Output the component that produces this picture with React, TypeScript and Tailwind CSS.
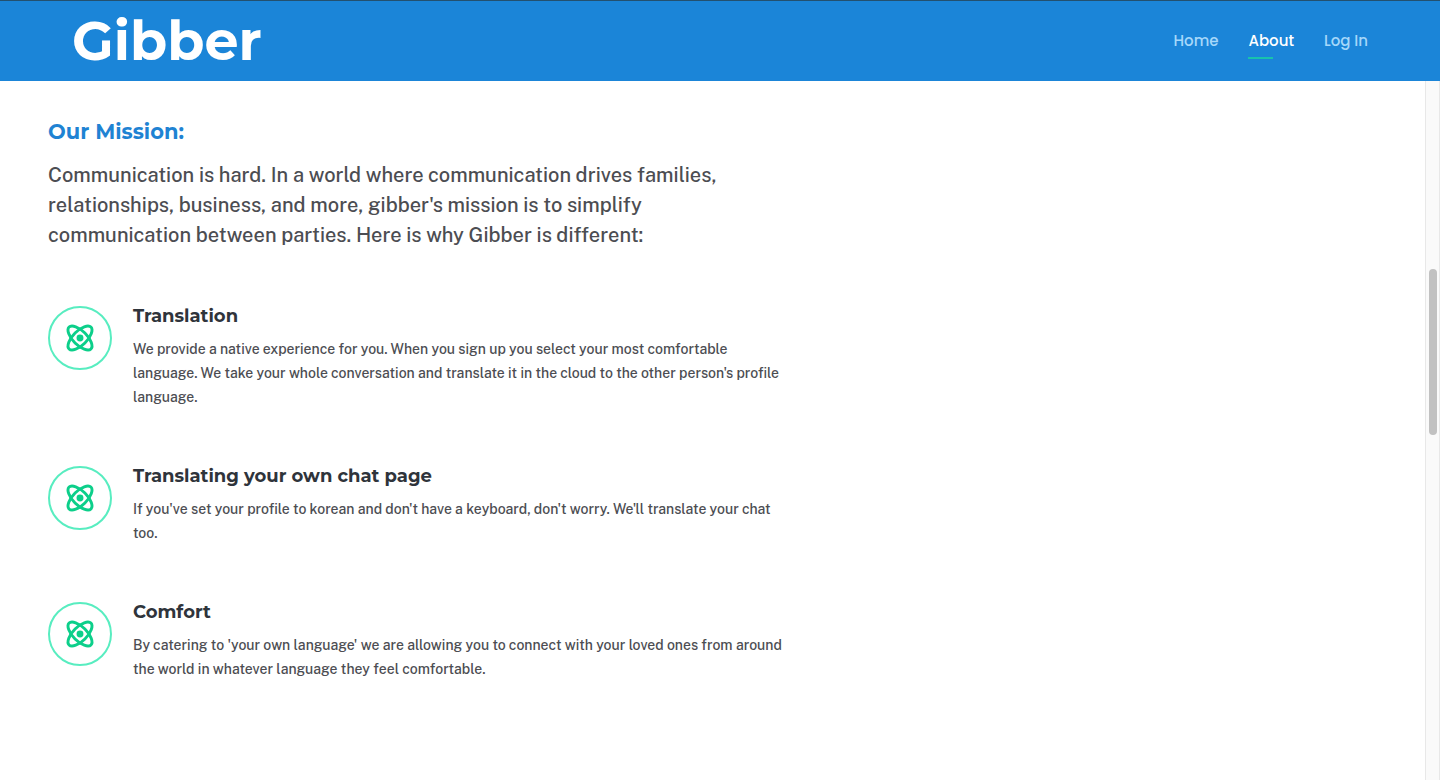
const navLinks = [
  { label: "Home", active: false },
  { label: "About", active: true },
  { label: "Log In", active: false },
];

const features = [
  {
    title: "Translation",
    text: "We provide a native experience for you. When you sign up you select your most comfortable language. We take your whole conversation and translate it in the cloud to the other person's profile language.",
  },
  {
    title: "Translating your own chat page",
    text: "If you've set your profile to korean and don't have a keyboard, don't worry. We'll translate your chat too.",
  },
  {
    title: "Comfort",
    text: "By catering to 'your own language' we are allowing you to connect with your loved ones from around the world in whatever language they feel comfortable.",
  },
];

function AtomIcon() {
  return (
    <svg viewBox="0 0 24 24" className="size-8" fill="none" stroke="#0ccf8a" strokeWidth="2.2" aria-hidden="true">
      <path d="M20.2 20.2c2.04-2.03.02-7.36-4.5-11.9-4.54-4.52-9.87-6.54-11.9-4.5-2.04 2.03-.02 7.36 4.5 11.9 4.54 4.52 9.87 6.54 11.9 4.5Z" />
      <path d="M15.7 15.7c4.52-4.54 6.54-9.87 4.5-11.9-2.03-2.04-7.36-.02-11.9 4.5-4.52 4.54-6.54 9.87-4.5 11.9 2.03 2.04 7.36.02 11.9-4.5Z" />
      <circle cx="12" cy="12" r="2.6" fill="#0ccf8a" stroke="none" />
    </svg>
  );
}

function Header() {
  return (
    <header className="flex h-[81px] items-center justify-between border-t border-[#23506f] bg-[#1b85d8] px-18">
      <a href="#" className="font-['Montserrat','Inter',sans-serif] text-[54px] leading-[80px] font-bold text-white">
        Gibber
      </a>
      <nav className="flex gap-[30px] font-['Poppins','Inter',sans-serif] text-[15px] leading-6 font-medium">
        {navLinks.map((link) => (
          <a
            key={link.label}
            href="#"
            className={link.active ? "relative text-white" : "text-[#a6d8fa]"}
          >
            {link.label}
            {link.active && <span className="absolute -bottom-[6px] left-0 h-[2px] w-[25px] bg-[#18c3ac]" />}
          </a>
        ))}
      </nav>
    </header>
  );
}

export default function App() {
  return (
    <div className="flex min-h-screen flex-col bg-white font-['Public_Sans','Inter',sans-serif] text-[#4c4d52] antialiased">
      <Header />
      <div className="flex grow">
        <main className="grow px-12 pt-9">
          <h1 className="font-['Montserrat','Inter',sans-serif] text-[21px] leading-[30px] font-bold text-[#1f83d3]">
            Our Mission:
          </h1>
          <p className="mt-[13px] max-w-[690px] text-[20px] leading-[30px] font-medium">
            Communication is hard. In a world where communication drives families, relationships, business, and more,
            gibber's mission is to simplify communication between parties. Here is why Gibber is different:
          </p>
          <ul className="mt-[53px] flex max-w-[740px] flex-col gap-[54px]">
            {features.map((feature) => (
              <li key={feature.title} className="flex items-start gap-[21px]">
                <span className="mt-[3px] flex size-16 shrink-0 items-center justify-center rounded-full border-2 border-[#58edc0]">
                  <AtomIcon />
                </span>
                <div>
                  <h2 className="font-['Montserrat','Inter',sans-serif] text-[18px] leading-[27px] font-bold text-[#2f343b]">
                    {feature.title}
                  </h2>
                  <p className="mt-[7px] text-[14px] leading-6 font-medium">{feature.text}</p>
                </div>
              </li>
            ))}
          </ul>
        </main>
        <div className="w-[15px] shrink-0 border-x border-[#e8e8e8] bg-[#fafafa] px-[3px] pt-[188px]" aria-hidden="true">
          <div className="h-[166px] w-2 rounded-full bg-[#c1c1c1]" />
        </div>
      </div>
    </div>
  );
}
